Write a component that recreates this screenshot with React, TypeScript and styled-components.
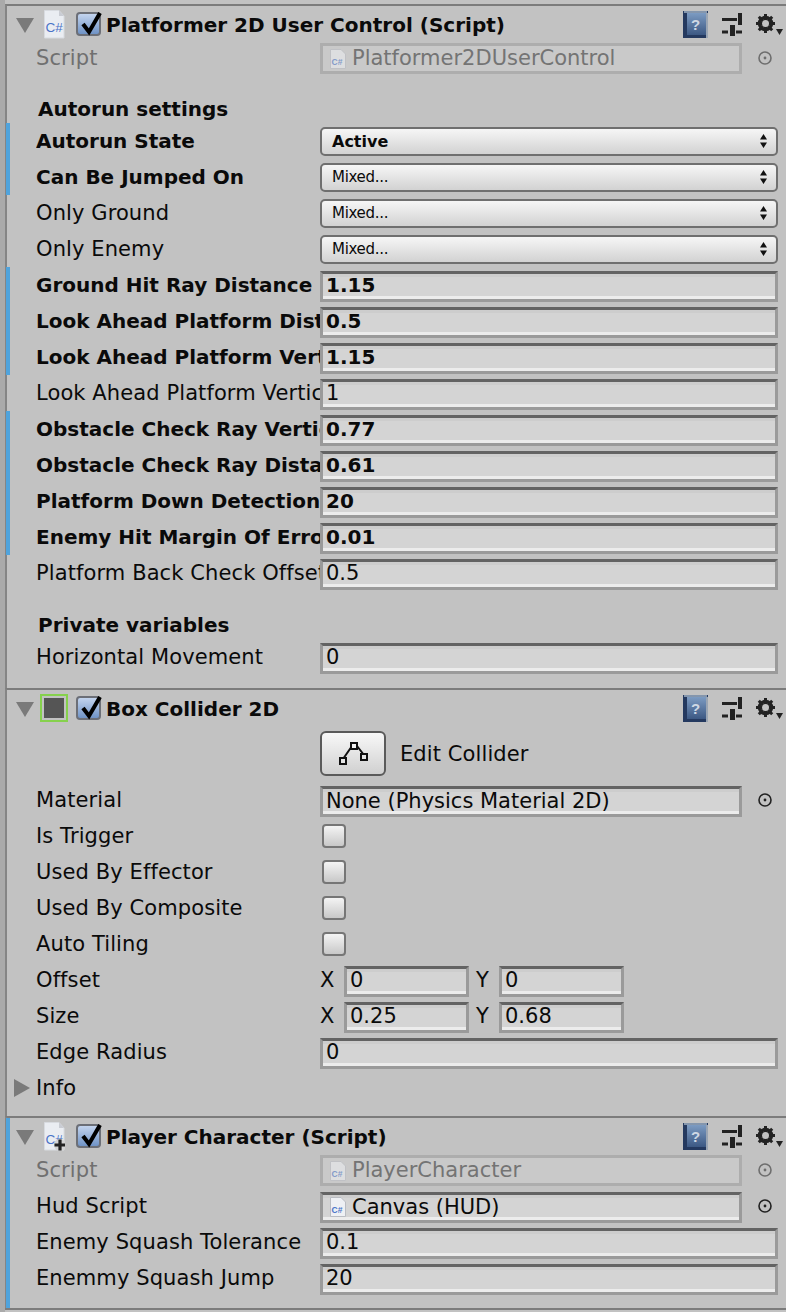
import React from "react";
import styled, { createGlobalStyle } from "styled-components";

const Global = createGlobalStyle`
  html, body { margin: 0; padding: 0; background: #c2c2c2; }
  body { font-family: "DejaVu Sans", "Liberation Sans", sans-serif; color: #0a0a0a; }
`;

const Page = styled.div`
  width: 786px;
  height: 1312px;
  overflow: hidden;
  display: flex;
  background: #c2c2c2;
`;
const Gutter = styled.div`
  width: 5px;
  flex: none;
  background: #aaaaaa;
`;
const Stack = styled.div`
  flex: 1;
  min-width: 0;
  padding-top: 4px;
`;
const Panel = styled.div<{ $h: number; $changed?: boolean }>`
  height: ${(p) => p.$h}px;
  box-sizing: border-box;
  border-left: 2px solid #858585;
  border-top: 2px solid #7c7c7c;
  position: relative;
  ${(p) =>
    p.$changed &&
    `&::before { content: ""; position: absolute; left: -1px; top: 0; bottom: 0; width: 4px; background: #4fa3dc; }`}
`;
const Header = styled.div`
  height: 36px;
  display: flex;
  align-items: center;
  padding-left: 9px;
`;
const Foldout = styled.svg`
  width: 18px;
  height: 15px;
  margin-top: 3px;
  flex: none;
`;
const IconSlot = styled.div`
  width: 28px;
  height: 28px;
  margin-left: 6px;
  flex: none;
  display: flex;
  justify-content: center;
`;
const Title = styled.div`
  font-size: 20px;
  font-weight: 700;
  white-space: nowrap;
  margin-left: 5px;
  margin-top: 1px;
`;
const HeaderIcons = styled.div`
  margin-left: auto;
  display: flex;
  align-items: center;
  gap: 14px;
  padding-right: 3px;
`;
const CheckBox = styled.div`
  width: 25px;
  height: 24px;
  box-sizing: border-box;
  margin-left: 8px;
  border: 2px solid #6c6f77;
  border-radius: 4px;
  background: linear-gradient(#c3d4ee, #6f93c6);
  position: relative;
  flex: none;
`;
const CheckMark = styled.svg`
  position: absolute;
  left: -1px;
  top: -5px;
`;
const Row = styled.div<{ $changed?: boolean; $h?: number; $pb?: number }>`
  height: ${(p) => p.$h ?? 36}px;
  box-sizing: border-box;
  padding-bottom: ${(p) => p.$pb ?? 0}px;
  display: flex;
  align-items: center;
  padding-left: 29px;
  padding-right: 8px;
  position: relative;
  ${(p) =>
    p.$changed &&
    `&::before { content: ""; position: absolute; left: -1px; top: 0; bottom: 0; width: 4px; background: #4fa3dc; }`}
`;
const Label = styled.div<{ $bold?: boolean; $dim?: boolean }>`
  width: 284px;
  flex: none;
  overflow: hidden;
  white-space: nowrap;
  font-size: ${(p) => (p.$bold ? 20 : 21)}px;
  letter-spacing: ${(p) => (p.$bold ? 0 : 0.1)}px;
  font-weight: ${(p) => (p.$bold ? 700 : 400)};
  color: ${(p) => (p.$dim ? "#707070" : "#0a0a0a")};
`;
const SectionTitle = styled.div<{ $mt: number }>`
  margin-top: ${(p) => p.$mt}px;
  height: 30px;
  line-height: 32px;
  padding-left: 31px;
  font-size: 20px;
  font-weight: 700;
`;
const NumberField = styled.div<{ $bold?: boolean; $w?: number }>`
  ${(p) => (p.$w ? `width: ${p.$w}px; flex: none;` : "flex: 1;")}
  height: 31px;
  margin-top: 2px;
  box-sizing: border-box;
  border: 3px solid #9a9a9a;
  border-top-color: #636363;
  background: linear-gradient(#cdcdcd 0 3px, #d4d4d4 3px calc(100% - 3px), #ececec calc(100% - 3px));
  padding-left: 3px;
  font-size: ${(p) => (p.$bold ? 20 : 21)}px;
  line-height: 23px;
  font-weight: ${(p) => (p.$bold ? 700 : 400)};
  white-space: nowrap;
  overflow: hidden;
`;
const ObjectField = styled(NumberField)<{ $dim?: boolean }>`
  flex: none;
  width: 422px;
  display: flex;
  align-items: center;
  gap: 6px;
  color: ${(p) => (p.$dim ? "#747474" : "#0a0a0a")};
  ${(p) => p.$dim && `border-color: #adadad; background: #c9c9c9;`}
`;
const Picker = styled.svg`
  width: 16px;
  height: 16px;
  margin-left: 15px;
  flex: none;
`;
const Select = styled.div<{ $bold?: boolean }>`
  flex: 1;
  height: 29px;
  box-sizing: border-box;
  border: 2px solid #6f6f6f;
  border-radius: 5px;
  background: linear-gradient(#f6f6f6, #d2d2d2);
  display: flex;
  align-items: center;
  justify-content: space-between;
  padding: 0 9px 0 10px;
  font-size: ${(p) => (p.$bold ? 16 : 15)}px;
  letter-spacing: ${(p) => (p.$bold ? 0 : -0.3)}px;
  font-weight: ${(p) => (p.$bold ? 700 : 400)};
`;
const Toggle = styled.div`
  width: 24px;
  height: 24px;
  box-sizing: border-box;
  margin-left: 2px;
  border: 2px solid #767676;
  border-radius: 4px;
  background: linear-gradient(#f4f4f4, #c8c8c8);
`;
const VectorGroup = styled.div`
  display: flex;
  align-items: center;
`;
const Axis = styled.div<{ $w: number; $pl: number }>`
  font-size: 21px;
  width: ${(p) => p.$w}px;
  padding-left: ${(p) => p.$pl}px;
  box-sizing: border-box;
`;
const EditButton = styled.div`
  width: 66px;
  height: 45px;
  margin-bottom: 2px;
  box-sizing: border-box;
  border: 2px solid #5a5a5a;
  border-radius: 6px;
  background: linear-gradient(#f8f8f8, #d0d0d0);
  display: flex;
  align-items: center;
  justify-content: center;
`;
const EditText = styled.div`
  font-size: 21px;
  letter-spacing: 0.1px;
  margin-left: 14px;
`;
const ClosedFold = styled.svg`
  width: 16px;
  height: 18px;
  margin-left: -22px;
  margin-right: 6px;
  flex: none;
`;
const SmallIcon = styled.svg<{ $dim?: boolean }>`
  width: 16px;
  height: 20px;
  margin-left: 4px;
  flex: none;
  opacity: ${(p) => (p.$dim ? 0.55 : 1)};
`;
const Closing = styled.div`
  border-top: 2px solid #7c7c7c;
`;

const Check = () => (
  <CheckBox>
    <CheckMark width="30" height="28" viewBox="0 0 30 28">
      <path d="M6 15L12 23L23 4" fill="none" stroke="#000" strokeWidth="4" />
    </CheckMark>
  </CheckBox>
);

const ScriptIcon = ({ plus }: { plus?: boolean }) => (
  <svg width="22" height="29" viewBox="0 0 22 29">
    <path d="M1.5.5H16L21 6V28H1.5Z" fill="#eaedf2" stroke="#d8dbe0" />
    <path d="M16 .5V6H21" fill="#c9ccd3" />
    <text x="2.5" y="22" fontFamily="Liberation Sans" fontSize="13.5" fill="#4a74c8">
      C#
    </text>
    {plus && (
      <g>
        <circle cx="17" cy="23" r="6" fill="#d4d4d4" />
        <path d="M17 17.5V28.5M11.5 23H22" stroke="#222" strokeWidth="3.2" />
      </g>
    )}
  </svg>
);

const SmallScript = ({ dim }: { dim?: boolean }) => (
  <SmallIcon $dim={dim} viewBox="0 0 16 20">
    <path d="M.5.5H11L15.5 5V19.5H.5Z" fill="#eef0f4" stroke="#b9bcc2" />
    <text x="1.5" y="16" fontFamily="Liberation Sans" fontSize="8.5" fontWeight="700" fill="#4a74c8">
      C#
    </text>
  </SmallIcon>
);

const HeaderRight = () => (
  <HeaderIcons>
    <svg width="25" height="27" viewBox="0 0 25 27">
      <defs>
        <linearGradient id="helpFill" x1="0" y1="0" x2="0" y2="1">
          <stop offset="0" stopColor="#7c9bc2" />
          <stop offset="1" stopColor="#3c5883" />
        </linearGradient>
      </defs>
      <rect width="25" height="27" fill="#24395f" />
      <rect x="1" y="0" width="23" height="2" fill="#8496ad" />
      <rect x="4" y="2" width="19" height="22" fill="url(#helpFill)" />
      <rect x="23" y="2" width="2" height="25" fill="#9aa5b3" />
      <text x="8" y="19" fontFamily="Liberation Sans" fontSize="15" fontWeight="700" fill="#cfd8e4">
        ?
      </text>
    </svg>
    <svg width="20" height="23" viewBox="0 0 20 23">
      <path d="M0 6.500H15M0 19H6M14 19H20" stroke="#222" strokeWidth="3" />
      <rect x="16" y="0" width="4" height="12" fill="#222" />
      <rect x="8" y="12" width="5" height="11" fill="#222" />
    </svg>
    <svg width="27" height="21" viewBox="0 0 27 21">
      <circle cx="9.500" cy="9.500" r="6" fill="none" stroke="#222" strokeWidth="3.500" />
      <path d="M9.500 0V19M0 9.500H19M2.800 2.800L16.200 16.200M16.200 2.800L2.800 16.200" stroke="#222" strokeWidth="3" />
      <circle cx="9.500" cy="9.500" r="3.500" fill="#c2c2c2" />
      <path d="M20 15H27L23.500 21Z" fill="#222" />
    </svg>
  </HeaderIcons>
);

const PickerIcon = ({ dim }: { dim?: boolean }) => (
  <Picker viewBox="0 0 16 16">
    <circle cx="8" cy="8" r="6" fill="none" stroke={dim ? "#6e6e6e" : "#222"} strokeWidth="1.6" />
    <circle cx="8" cy="8" r="1.4" fill={dim ? "#6e6e6e" : "#222"} />
  </Picker>
);

const Arrows = () => (
  <svg width="7" height="14" viewBox="0 0 7 14">
    <path d="M3.500 0L7 5.500H0ZM3.500 14L0 8.500H7Z" fill="#111" />
  </svg>
);

const ComponentHeader = ({ icon, title }: { icon: React.ReactNode; title: string }) => (
  <Header>
    <Foldout viewBox="0 0 18 15">
      <path d="M0 0H18L9 15Z" fill="#7a7a7a" />
    </Foldout>
    <IconSlot>{icon}</IconSlot>
    <Check />
    <Title>{title}</Title>
    <HeaderRight />
  </Header>
);

const selects = [
  { label: "Autorun State", value: "Active", changed: true, bold: true },
  { label: "Can Be Jumped On", value: "Mixed...", changed: true },
  { label: "Only Ground", value: "Mixed..." },
  { label: "Only Enemy", value: "Mixed..." },
];
const numbers = [
  { label: "Ground Hit Ray Distance", value: "1.15", changed: true },
  { label: "Look Ahead Platform Distance", value: "0.5", changed: true },
  { label: "Look Ahead Platform Vertical", value: "1.15", changed: true },
  { label: "Look Ahead Platform Vertical Min", value: "1" },
  { label: "Obstacle Check Ray Vertical", value: "0.77", changed: true },
  { label: "Obstacle Check Ray Distance", value: "0.61", changed: true },
  { label: "Platform Down Detection", value: "20", changed: true },
  { label: "Enemy Hit Margin Of Error", value: "0.01", changed: true },
  { label: "Platform Back Check Offset", value: "0.5" },
];

const GizmoIcon = () => (
  <svg width="28" height="28" viewBox="0 0 28 28">
    <rect x="1" y="1" width="26" height="26" fill="none" stroke="#86d14d" strokeWidth="2" />
    <rect x="4" y="4" width="20" height="20" fill="#555" />
  </svg>
);

const PolyIcon = () => (
  <svg width="31" height="25" viewBox="0 0 31 25">
    <path d="M5 18L14 5M19 5L26 14" stroke="#111" strokeWidth="2" fill="none" />
    <rect x="13" y="2" width="6" height="6" fill="#f2f2f2" stroke="#111" strokeWidth="2" />
    <rect x="23" y="13" width="6" height="6" fill="#e6e6e6" stroke="#111" strokeWidth="2" />
    <rect x="2" y="17" width="6" height="6" fill="#e6e6e6" stroke="#111" strokeWidth="2" />
  </svg>
);

export default function App() {
  return (
    <Page>
      <Global />
      <Gutter />
      <Stack>
        <Panel $h={684}>
          <ComponentHeader icon={<ScriptIcon />} title="Platformer 2D User Control (Script)" />
          <Row $h={34} $pb={3}>
            <Label $dim>Script</Label>
            <ObjectField $dim>
              <SmallScript dim />
              Platformer2DUserControl
            </ObjectField>
            <PickerIcon dim />
          </Row>
          <SectionTitle $mt={17}>Autorun settings</SectionTitle>
          {selects.map((s) => (
            <Row key={s.label} $changed={s.changed}>
              <Label $bold={s.changed}>{s.label}</Label>
              <Select $bold={s.bold}>
                {s.value}
                <Arrows />
              </Select>
            </Row>
          ))}
          {numbers.map((n) => (
            <Row key={n.label} $changed={n.changed}>
              <Label $bold={n.changed}>{n.label}</Label>
              <NumberField $bold={n.changed}>{n.value}</NumberField>
            </Row>
          ))}
          <SectionTitle $mt={18}>Private variables</SectionTitle>
          <Row>
            <Label>Horizontal Movement</Label>
            <NumberField>0</NumberField>
          </Row>
        </Panel>
        <Panel $h={428}>
          <ComponentHeader icon={<GizmoIcon />} title="Box Collider 2D" />
          <Row $h={56}>
            <Label />
            <EditButton>
              <PolyIcon />
            </EditButton>
            <EditText>Edit Collider</EditText>
          </Row>
          <Row>
            <Label>Material</Label>
            <ObjectField>None (Physics Material 2D)</ObjectField>
            <PickerIcon />
          </Row>
          {["Is Trigger", "Used By Effector", "Used By Composite", "Auto Tiling"].map((t) => (
            <Row key={t}>
              <Label>{t}</Label>
              <Toggle />
            </Row>
          ))}
          {[
            ["Offset", "0", "0"],
            ["Size", "0.25", "0.68"],
          ].map(([l, x, y]) => (
            <Row key={l}>
              <Label>{l}</Label>
              <VectorGroup>
                <Axis $w={24} $pl={0}>X</Axis>
                <NumberField $w={125}>{x}</NumberField>
                <Axis $w={30} $pl={7}>Y</Axis>
                <NumberField $w={125}>{y}</NumberField>
              </VectorGroup>
            </Row>
          ))}
          <Row>
            <Label>Edge Radius</Label>
            <NumberField>0</NumberField>
          </Row>
          <Row>
            <ClosedFold viewBox="0 0 16 18">
              <path d="M0 0L16 9L0 18Z" fill="#7a7a7a" />
            </ClosedFold>
            <Label>Info</Label>
          </Row>
        </Panel>
        <Panel $h={192} $changed>
          <ComponentHeader icon={<ScriptIcon plus />} title="Player Character (Script)" />
          <Row $h={34} $pb={3}>
            <Label $dim>Script</Label>
            <ObjectField $dim>
              <SmallScript dim />
              PlayerCharacter
            </ObjectField>
            <PickerIcon dim />
          </Row>
          <Row>
            <Label>Hud Script</Label>
            <ObjectField>
              <SmallScript />
              Canvas (HUD)
            </ObjectField>
            <PickerIcon />
          </Row>
          <Row>
            <Label>Enemy Squash Tolerance</Label>
            <NumberField>0.1</NumberField>
          </Row>
          <Row>
            <Label>Enemmy Squash Jump</Label>
            <NumberField>20</NumberField>
          </Row>
        </Panel>
        <Closing />
      </Stack>
    </Page>
  );
}
